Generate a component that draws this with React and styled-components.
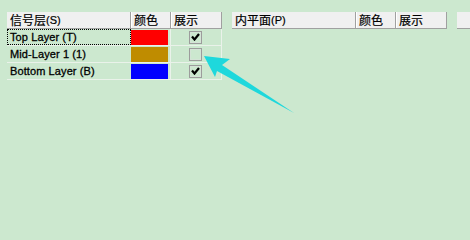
import React from "react";
import styled, { createGlobalStyle } from "styled-components";

const Global = createGlobalStyle`
  html, body { margin: 0; padding: 0; background: #cce8cf; }
  body { width: 470px; height: 217px; overflow: hidden; }
`;

const Page = styled.div`
  position: relative;
  width: 470px;
  height: 217px;
  background: #cce8cf;
  display: flex;
  align-items: flex-start;
  gap: 10px;
  padding: 12px 0 0 7px;
  box-sizing: border-box;
  overflow: hidden;
  font-family: "Liberation Sans", Arial, "Noto Sans CJK SC", sans-serif;
  color: #000;
`;

const Table = styled.div`
  flex: 0 0 auto;
  width: 215px;
  display: flex;
  flex-direction: column;
`;

const Header = styled.div`
  display: grid;
  grid-template-columns: 124px 40px 51px;
  height: 17px;
  background: #f0f0f0;
  border-right: 1px solid #a0a0a0;
  border-bottom: 1px solid #a0a0a0;
  box-sizing: border-box;
`;

const HeadCell = styled.div`
  display: flex;
  align-items: center;
  padding-left: 3px;
  font-size: 12px;
  line-height: 1;
  white-space: nowrap;
  overflow: hidden;
  border-right: ${(p) => (p.$last ? "none" : "1px solid #a0a0a0")};
  box-shadow: ${(p) => (p.$last ? "none" : "1px 0 0 #ffffff")};
  font-family: "Noto Sans CJK SC", "Liberation Sans", sans-serif;
  color: #000;
  -webkit-text-stroke: 0.2px #000;
`;

const Paren = styled.span`
  font-family: "Liberation Sans", Arial, sans-serif;
  font-size: 11px;
`;

const Row = styled.div`
  display: grid;
  grid-template-columns: 124px 40px 51px;
  height: 17px;
  box-sizing: border-box;
  border-bottom: 1px solid #eaf2ea;
  border-right: 1px solid #eaf2ea;
`;

const NameCell = styled.div`
  display: flex;
  align-items: center;
  padding-left: 2px;
  font-size: 11px;
  white-space: nowrap;
  box-sizing: border-box;
  border: 1px ${(p) => (p.$focus ? "dotted #000" : "solid transparent")};
  -webkit-text-stroke: 0.3px #000;
  letter-spacing: 0.1px;
`;

const ColorCell = styled.div`
  padding: 1px 2px 0 0;
  box-sizing: border-box;
  border-right: 1px solid #eaf2ea;
`;

const Swatch = styled.div`
  width: 100%;
  height: 100%;
  background: ${(p) => p.$color};
`;

const CheckCell = styled.div`
  display: flex;
  align-items: center;
  justify-content: center;
  padding-right: 2px;
`;

const Box = styled.div`
  width: 13px;
  height: 13px;
  box-sizing: border-box;
  border: 1px solid #9c9c9c;
  box-shadow: inset 0 0 0 1px #d4e4d6;
  display: flex;
  align-items: center;
  justify-content: center;
`;

const Arrow = styled.svg`
  position: absolute;
  left: 0;
  top: 0;
  pointer-events: none;
`;

const Check = () => (
  <svg width="9" height="8" viewBox="0 0 9 8">
    <path d="M1 3.5 L3.5 6.5 L8 1" fill="none" stroke="#000" strokeWidth="2.2" />
  </svg>
);

const layers = [
  { name: "Top Layer (T)", color: "#ff0000", on: true, focus: true },
  { name: "Mid-Layer 1 (1)", color: "#bf8c00", on: false },
  { name: "Bottom Layer (B)", color: "#0000ff", on: true },
];

export default function App() {
  return (
    <>
      <Global />
      <Page>
        <Table>
          <Header>
            <HeadCell>信号层<Paren>(S)</Paren></HeadCell>
            <HeadCell>颜色</HeadCell>
            <HeadCell $last>展示</HeadCell>
          </Header>
          {layers.map((l) => (
            <Row key={l.name}>
              <NameCell $focus={l.focus}>{l.name}</NameCell>
              <ColorCell>
                <Swatch $color={l.color} />
              </ColorCell>
              <CheckCell>
                <Box>{l.on && <Check />}</Box>
              </CheckCell>
            </Row>
          ))}
        </Table>
        <Table>
          <Header>
            <HeadCell>内平面<Paren>(P)</Paren></HeadCell>
            <HeadCell>颜色</HeadCell>
            <HeadCell $last>展示</HeadCell>
          </Header>
        </Table>
        <Table>
          <Header>
            <HeadCell> </HeadCell>
          </Header>
        </Table>
        <Arrow width="470" height="217" viewBox="0 0 470 217">
          <polygon
            points="204,56 230,59 222,65 294,113 217,71 215,77"
            fill="#1ed8dc"
          />
        </Arrow>
      </Page>
    </>
  );
}
